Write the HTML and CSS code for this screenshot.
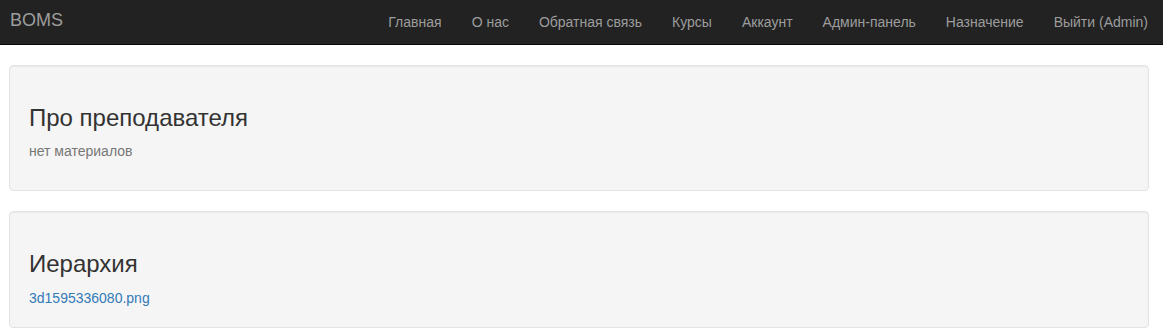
FILE: index.html
```html
<!DOCTYPE html>
<html>
    <head>
        <meta charset="utf-8">
        <title>BOMS</title>
        <link rel="stylesheet" href="styles.css">
    </head>
    <body>
        <nav class="navbar">
            <a class="navbar-brand" href="#">BOMS</a>
            <ul class="navbar-nav">
                <li><a href="#">Главная</a></li>
                <li><a href="#">О нас</a></li>
                <li><a href="#">Обратная связь</a></li>
                <li><a href="#">Курсы</a></li>
                <li><a href="#">Аккаунт</a></li>
                <li><a href="#">Админ-панель</a></li>
                <li><a href="#">Назначение</a></li>
                <li><a href="#">Выйти (Admin)</a></li>
            </ul>
        </nav>

        <div class="content">
            <div class="well">
                <h3>Про преподавателя</h3>
                <p class="text-muted">нет материалов</p>
            </div>

            <div class="well">
                <h3>Иерархия</h3>
                <a href="#">3d1595336080.png</a>
            </div>
        </div>
    </body>
</html>
```

FILE: styles.css
```css
:root {
    --navbar-bg: #222222;
    --navbar-border: #080808;
    --navbar-link: #9d9d9d;
    --font-clr: #333333;
    --muted-clr: #777777;
    --link-clr: #337ab7;
    --well-bg: #f5f5f5;
    --well-border: #e3e3e3;
}

* {
    box-sizing: border-box;
}

body {
    margin: 0;
    font-family: "Liberation Sans", Arial, sans-serif;
    font-size: 14px;
    line-height: 20px;
    color: var(--font-clr);
    background-color: #fff;
}

a {
    color: var(--link-clr);
    text-decoration: none;
}

.navbar {
    display: flex;
    align-items: flex-start;
    height: 45px;
    background-color: var(--navbar-bg);
    border-bottom: 1px solid var(--navbar-border);
    margin-bottom: 20px;
}

.navbar-brand {
    padding: 10px 10px;
    font-size: 18px;
    line-height: 20px;
    color: var(--navbar-link);
}

.navbar-nav {
    display: flex;
    list-style: none;
    margin: 0 0 0 auto;
    padding: 0;
}

.navbar-nav a {
    display: block;
    padding: 12px 15px;
    line-height: 20px;
    color: var(--navbar-link);
}

.content {
    padding: 0 14px 0 9px;
}

.well {
    min-height: 20px;
    padding: 19px;
    margin-bottom: 20px;
    background-color: var(--well-bg);
    border: 1px solid var(--well-border);
    border-radius: 4px;
    box-shadow: inset 0 1px 1px rgba(0, 0, 0, .05);
}

h3 {
    font-size: 24px;
    font-weight: 500;
    line-height: 1.1;
    margin: 20px 0 10px;
}

p {
    margin: 0 0 10px;
}

.text-muted {
    color: var(--muted-clr);
}
```
